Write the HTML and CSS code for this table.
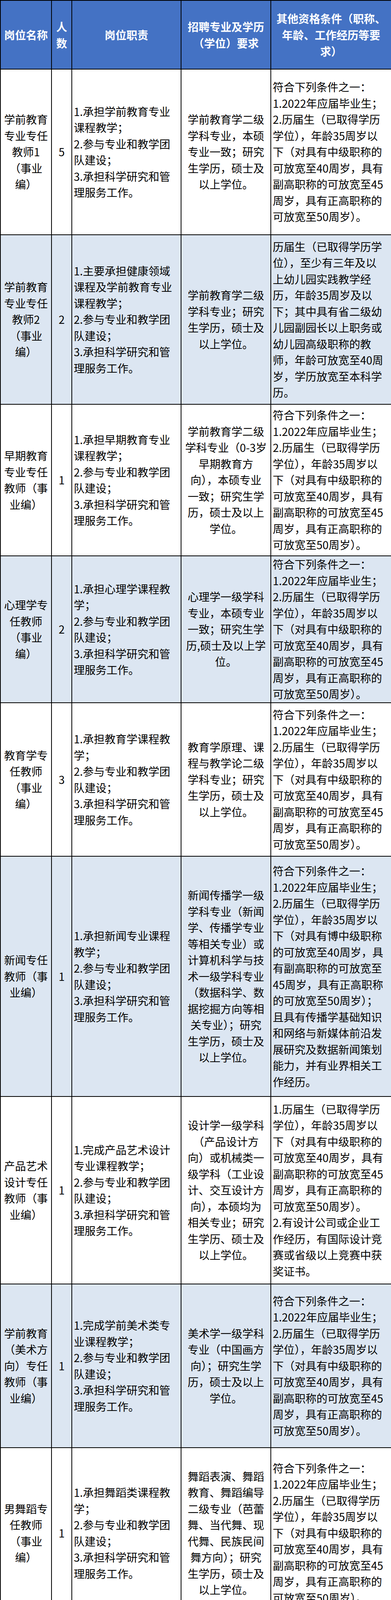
FILE: index.html
```html
<!DOCTYPE html>
<html lang="zh-CN">
<head>
<meta charset="utf-8">
<title>招聘岗位表</title>
<link rel="stylesheet" href="styles.css">
</head>
<body>
<table class="sheet">
<colgroup>
<col class="w1"><col class="w2"><col class="w3"><col class="w4"><col class="w5">
</colgroup>
<thead>
<tr class="rh">
<th>岗位名称</th>
<th>人<br>数</th>
<th>岗位职责</th>
<th>招聘专业及学历<br>（学位）要求</th>
<th>其他资格条件（职称、<br>年龄、工作经历等要<br>求）</th>
</tr>
</thead>
<tbody>
<tr class="r1">
<td class="c-name">学前教育<br>专业专任<br>教师1<br>（事业<br>编）</td>
<td class="c-num">5</td>
<td class="c-duty">1.承担学前教育专业<br>课程教学；<br>2.参与专业和教学团<br>队建设；<br>3.承担科学研究和管<br>理服务工作。</td>
<td class="c-major">学前教育学二级<br>学科专业，本硕<br>专业一致；研究<br>生学历，硕士及<br>以上学位。</td>
<td class="c-cond">符合下列条件之一：<br>1.2022年应届毕业生；<br>2.历届生（已取得学历<br>学位），年龄35周岁以<br>下（对具有中级职称的<br>可放宽至40周岁，具有<br>副高职称的可放宽至45<br>周岁，具有正高职称的<br>可放宽至50周岁）。</td>
</tr>
<tr class="r2 alt">
<td class="c-name">学前教育<br>专业专任<br>教师2<br>（事业<br>编）</td>
<td class="c-num">2</td>
<td class="c-duty">1.主要承担健康领域<br>课程及学前教育专业<br>课程教学；<br>2.参与专业和教学团<br>队建设；<br>3.承担科学研究和管<br>理服务工作。</td>
<td class="c-major">学前教育学二级<br>学科专业；研究<br>生学历，硕士及<br>以上学位。</td>
<td class="c-cond">历届生（已取得学历学<br>位），至少有三年及以<br>上幼儿园实践教学经<br>历，年龄35周岁及以<br>下；其中具有省二级幼<br>儿园副园长以上职务或<br>幼儿园高级职称的教<br>师，年龄可放宽至40周<br>岁，学历放宽至本科学<br>历。</td>
</tr>
<tr class="r3">
<td class="c-name">早期教育<br>专业专任<br>教师（事<br>业编）</td>
<td class="c-num">1</td>
<td class="c-duty">1.承担早期教育专业<br>课程教学；<br>2.参与专业和教学团<br>队建设；<br>3.承担科学研究和管<br>理服务工作。</td>
<td class="c-major">学前教育学二级<br>学科专业（0-3岁<br>早期教育方<br>向），本硕专业<br>一致；研究生学<br>历，硕士及以上<br>学位。</td>
<td class="c-cond">符合下列条件之一：<br>1.2022年应届毕业生；<br>2.历届生（已取得学历<br>学位），年龄35周岁以<br>下（对具有中级职称的<br>可放宽至40周岁，具有<br>副高职称的可放宽至45<br>周岁，具有正高职称的<br>可放宽至50周岁）。</td>
</tr>
<tr class="r4 alt">
<td class="c-name">心理学专<br>任教师<br>（事业<br>编）</td>
<td class="c-num">2</td>
<td class="c-duty">1.承担心理学课程教<br>学；<br>2.参与专业和教学团<br>队建设；<br>3.承担科学研究和管<br>理服务工作。</td>
<td class="c-major">心理学一级学科<br>专业，本硕专业<br>一致；研究生学<br>历,硕士及以上学<br>位。</td>
<td class="c-cond">符合下列条件之一：<br>1.2022年应届毕业生；<br>2.历届生（已取得学历<br>学位），年龄35周岁以<br>下（对具有中级职称的<br>可放宽至40周岁，具有<br>副高职称的可放宽至45<br>周岁，具有正高职称的<br>可放宽至50周岁）。</td>
</tr>
<tr class="r5">
<td class="c-name">教育学专<br>任教师<br>（事业<br>编）</td>
<td class="c-num">3</td>
<td class="c-duty">1.承担教育学课程教<br>学；<br>2.参与专业和教学团<br>队建设；<br>3.承担科学研究和管<br>理服务工作。</td>
<td class="c-major">教育学原理、课<br>程与教学论二级<br>学科专业；研究<br>生学历，硕士及<br>以上学位。</td>
<td class="c-cond">符合下列条件之一：<br>1.2022年应届毕业生；<br>2.历届生（已取得学历<br>学位），年龄35周岁以<br>下（对具有中级职称的<br>可放宽至40周岁，具有<br>副高职称的可放宽至45<br>周岁，具有正高职称的<br>可放宽至50周岁）。</td>
</tr>
<tr class="r6 alt">
<td class="c-name">新闻专任<br>教师（事<br>业编）</td>
<td class="c-num">1</td>
<td class="c-duty">1.承担新闻专业课程<br>教学；<br>2.参与专业和教学团<br>队建设；<br>3.承担科学研究和管<br>理服务工作。</td>
<td class="c-major">新闻传播学一级<br>学科专业（新闻<br>学、传播学专业<br>等相关专业）或<br>计算机科学与技<br>术一级学科专业<br>（数据科学、数<br>据挖掘方向等相<br>关专业）；研究<br>生学历，硕士及<br>以上学位。</td>
<td class="c-cond">符合下列条件之一：<br>1.2022年应届毕业生；<br>2.历届生（已取得学历<br>学位），年龄35周岁以<br>下（对具有博中级职称<br>的可放宽至40周岁，具<br>有副高职称的可放宽至<br>45周岁，具有正高职称<br>的可放宽至50周岁）；<br>且具有传播学基础知识<br>和网络与新媒体前沿发<br>展研究及数据新闻策划<br>能力，并有业界相关工<br>作经历。</td>
</tr>
<tr class="r7">
<td class="c-name">产品艺术<br>设计专任<br>教师（事<br>业编）</td>
<td class="c-num">1</td>
<td class="c-duty">1.完成产品艺术设计<br>专业课程教学；<br>2.参与专业和教学团<br>队建设；<br>3.承担科学研究和管<br>理服务工作。</td>
<td class="c-major">设计学一级学科<br>（产品设计方<br>向）或机械类一<br>级学科（工业设<br>计、交互设计方<br>向），本硕均为<br>相关专业；研究<br>生学历、硕士及<br>以上学位。</td>
<td class="c-cond">1.历届生（已取得学历<br>学位），年龄35周岁以<br>下（对具有中级职称的<br>可放宽至40周岁，具有<br>副高职称的可放宽至45<br>周岁，具有正高职称的<br>可放宽至50周岁）。<br>2.有设计公司或企业工<br>作经历，有国际设计竞<br>赛或省级以上竞赛中获<br>奖证书。</td>
</tr>
<tr class="r8 alt">
<td class="c-name">学前教育<br>（美术方<br>向）专任<br>教师（事<br>业编）</td>
<td class="c-num">1</td>
<td class="c-duty">1.完成学前美术类专<br>业课程教学；<br>2.参与专业和教学团<br>队建设；<br>3.承担科学研究和管<br>理服务工作。</td>
<td class="c-major">美术学一级学科<br>专业（中国画方<br>向）；研究生学<br>历，硕士及以上<br>学位。</td>
<td class="c-cond">符合下列条件之一：<br>1.2022年应届毕业生；<br>2.历届生（已取得学历<br>学位），年龄35周岁以<br>下（对具有中级职称的<br>可放宽至40周岁，具有<br>副高职称的可放宽至45<br>周岁，具有正高职称的<br>可放宽至50周岁）。</td>
</tr>
<tr class="r9">
<td class="c-name">男舞蹈专<br>任教师<br>（事业<br>编）</td>
<td class="c-num">1</td>
<td class="c-duty">1.承担舞蹈类课程教<br>学；<br>2.参与专业和教学团<br>队建设；<br>3.承担科学研究和管<br>理服务工作。</td>
<td class="c-major">舞蹈表演、舞蹈<br>教育、舞蹈编导<br>二级专业（芭蕾<br>舞、当代舞、现<br>代舞、民族民间<br>舞方向）；研究<br>生学历，硕士及<br>以上学位。</td>
<td class="c-cond">符合下列条件之一：<br>1.2022年应届毕业生；<br>2.历届生（已取得学历<br>学位），年龄35周岁以<br>下（对具有中级职称的<br>可放宽至40周岁，具有<br>副高职称的可放宽至45<br>周岁，具有正高职称的<br>可放宽至50周岁）。</td>
</tr>
<tr class="r10 alt">
<td class="c-name">女舞蹈专<br>任教师<br>（事业<br>编）</td>
<td class="c-num">1</td>
<td class="c-duty">1.承担舞蹈类课程教<br>学；<br>2.参与专业和教学团<br>队建设；<br>3.承担科学研究和管<br>理服务工作。</td>
<td class="c-major">舞蹈表演、舞蹈<br>教育、舞蹈编导<br>二级专业（芭蕾<br>舞、当代舞、现<br>代舞方向）；研<br>究生学历，硕士<br>及以上学位。</td>
<td class="c-cond">符合下列条件之一：<br>1.2022年应届毕业生；<br>2.历届生（已取得学历<br>学位），年龄35周岁以<br>下（对具有中级职称的<br>可放宽至40周岁，具有<br>副高职称的可放宽至45<br>周岁，具有正高职称的<br>可放宽至50周岁）。</td>
</tr>
<tr class="r11">
<td class="c-name">男声乐专<br>任教师<br>（事业<br>编）</td>
<td class="c-num">1</td>
<td class="c-duty">1.承担声乐类课程教<br>学；<br>2.参与专业和教学团<br>队建设；<br>3.承担科学研究和管<br>理服务工作。</td>
<td class="c-major">音乐与舞蹈学一<br>级学科专业（音<br>乐学、音乐表演<br>、声乐表演、声<br>乐教育方向），<br>要求本科、硕士<br>阶段专业或研究<br>方向一致；研究<br>生学历，硕士及<br>以上学位。</td>
<td class="c-cond">男高音或男中音；且符<br>合下列条件之一：<br>1.2022年应届毕业生；<br>2.历届生（已取得学历<br>学位），年龄35周岁以<br>下（对具有中级职称的<br>可放宽至40周岁，具有<br>副高职称的可放宽至45<br>周岁，具有正高职称的<br>可放宽至50周岁）。</td>
</tr>
<tr class="r12 alt">
<td class="c-name">女声乐专<br>任教师<br>（事业<br>编）</td>
<td class="c-num">1</td>
<td class="c-duty">1.承担声乐类课程教<br>学；<br>2.参与专业和教学团<br>队建设；<br>3.承担科学研究和管<br>理服务工作。</td>
<td class="c-major">音乐与舞蹈学一<br>级学科专业（音<br>乐学、音乐表演<br>、声乐表演、声<br>乐教育方向），<br>要求本科、硕士<br>阶段专业或研究<br>方向一致；研究<br>生学历，硕士及<br>以上学位。</td>
<td class="c-cond">女高音或女中音；符合<br>下列条件之一：1.2022<br>年应届毕业生；2.历届<br>生（已取得学历学<br>位），年龄35周岁以下<br>（对具有中级职称的可<br>放宽至40周岁，具有副<br>高职称的可放宽至45周<br>岁，具有正高职称的可<br>放宽至50周岁）。</td>
</tr>
<tr class="r13">
<td class="c-name">钢琴专任<br>教师（事<br>业编）</td>
<td class="c-num">2</td>
<td class="c-duty">1.完成钢琴类专业课<br>程教学；<br>2.参与专业和教学团<br>队建设；<br>3.承担科学研究和管<br>理服务工作。</td>
<td class="c-major">音乐与舞蹈学一<br>级学科专业（音<br>乐学、音乐表演<br>专业，钢琴教育<br>、钢琴表演方<br>向），要求本科<br>、硕士阶段专业<br>或研究方向一<br>致；研究生学<br>历，硕士及以上<br>学位。</td>
<td class="c-cond">符合下列条件之一：<br>1.2022年应届毕业生；<br>2.历届生（已取得学历<br>学位），年龄35周岁以<br>下（对具有中级职称的<br>可放宽至40周岁，具有<br>副高职称的可放宽至45<br>周岁，具有正高职称的<br>可放宽至50周岁）。</td>
</tr>
<tr class="r14 alt">
<td class="c-name">体育专任<br>教师1<br>（事业<br>编）</td>
<td class="c-num">2</td>
<td class="c-duty">1.完成体育类课程教<br>学；<br>2.参与专业和教学团<br>队建设；<br>3.承担科学研究和管<br>理服务工作。</td>
<td class="c-major">本科、硕士均为<br>体育学二级学科<br>专业；研究生学<br>历，硕士及以上<br>学位。</td>
<td class="c-cond">体育舞蹈、体操类、健<br>美操专项，具有国家二<br>级运动员(含)以上资格<br>证书，或带队或本人参<br>加过省级以上专业比赛<br>获过前三名成绩者；且<br>符合下列条件之一：<br>1.2022年应届毕业生；<br>2.历届生（已取得学历<br>学位），年龄35周岁以<br>下（对具有中级职称的<br>可放宽至40周岁，具有<br>副高职称的可放宽至45<br>周岁，具有正高职称的<br>可放宽至50周岁）。</td>
</tr>
<tr class="r15">
<td class="c-name">体育专任<br>教师2<br>（事业<br>编）</td>
<td class="c-num">1</td>
<td class="c-duty">1.完成体育类课程教<br>学；<br>2.参与专业和教学团<br>队建设；<br>3.承担科学研究和管<br>理服务工作。</td>
<td class="c-major">本科、硕士均为<br>体育学二级学科<br>专业；研究生学<br>历，硕士及以上<br>学位。</td>
<td class="c-cond">篮球、排球、乒乓球专<br>项，具有国家二级运动<br>员(含)以上资格证书，<br>或带队或本人参加过省<br>级以上专业比赛获过前<br>三名成绩者；且符合下<br>列条件之一：1.2022年<br>应届毕业生；2.历届生<br>（已取得学历学位），<br>年龄35周岁以下（对具<br>有中级职称的可放宽至<br>40周岁，具有副高职称<br>的可放宽至45周岁，具<br>有正高职称的可放宽至<br>50周岁）。</td>
</tr>
<tr class="r16 alt">
<td class="c-name">思政课教<br>师（事业<br>编）</td>
<td class="c-num">2</td>
<td class="c-duty">1.承担思政课教学工<br>作；<br>2.参与专业和教学团<br>队建设；<br>3.承担科学研究和管<br>理服务工作。</td>
<td class="c-major">法学、马克思主<br>义理论和历史学<br>一级学科专业；<br>研究生学历，硕<br>士及以上学位。</td>
<td class="c-cond">符合下列条件之一：<br>1.2022年应届毕业生；<br>2.历届生（已取得学历<br>学位），年龄35周岁以<br>下（对具有中级职称的<br>可放宽至40周岁，具有<br>副高职称的可放宽至45<br>周岁，具有正高职称的<br>可放宽至50周岁）。</td>
</tr>
</tbody>
</table>
</body>
</html>
```
FILE: styles.css
```css
html, body {
  margin: 0;
  padding: 0;
  background: #ffffff;
}

body {
  font-family: "Noto Sans CJK SC", "Microsoft YaHei", sans-serif;
  color: #000000;
}

.sheet {
  width: 1002px;
  border-collapse: collapse;
  table-layout: fixed;
}

.w1 { width: 131px; }
.w2 { width: 52px; }
.w3 { width: 280px; }
.w4 { width: 230px; }
.w5 { width: 309px; }

.sheet th,
.sheet td {
  border: 2px solid #000000;
  padding: 0 4px;
  font-size: 28px;
  line-height: 41.5px;
  vertical-align: middle;
  white-space: nowrap;
}

.sheet th {
  background: #4472c4;
  color: #ffffff;
  font-weight: 700;
  text-align: center;
  padding: 0 2px;
  line-height: 42px;
}

.c-name,
.c-num,
.c-major {
  text-align: center;
}

.c-duty,
.c-cond {
  text-align: left;
}

.sheet td.c-name,
.sheet td.c-num {
  padding: 0 2px;
}

.alt td {
  background: #dce6f2;
}

.rh { height: 176px; }
.r1 { height: 424px; }
.r2 { height: 434px; }
.r3 { height: 388px; }
.r4 { height: 376px; }
.r5 { height: 393px; }
.r6 { height: 615px; }
.r7 { height: 480px; }
.r8 { height: 419px; }
.r9 { height: 437px; }
.r10 { height: 398px; }
.r11 { height: 444px; }
.r12 { height: 430px; }
.r13 { height: 471px; }
.r14 { height: 629px; }
.r15 { height: 626px; }
.r16 { height: 376px; }
```
